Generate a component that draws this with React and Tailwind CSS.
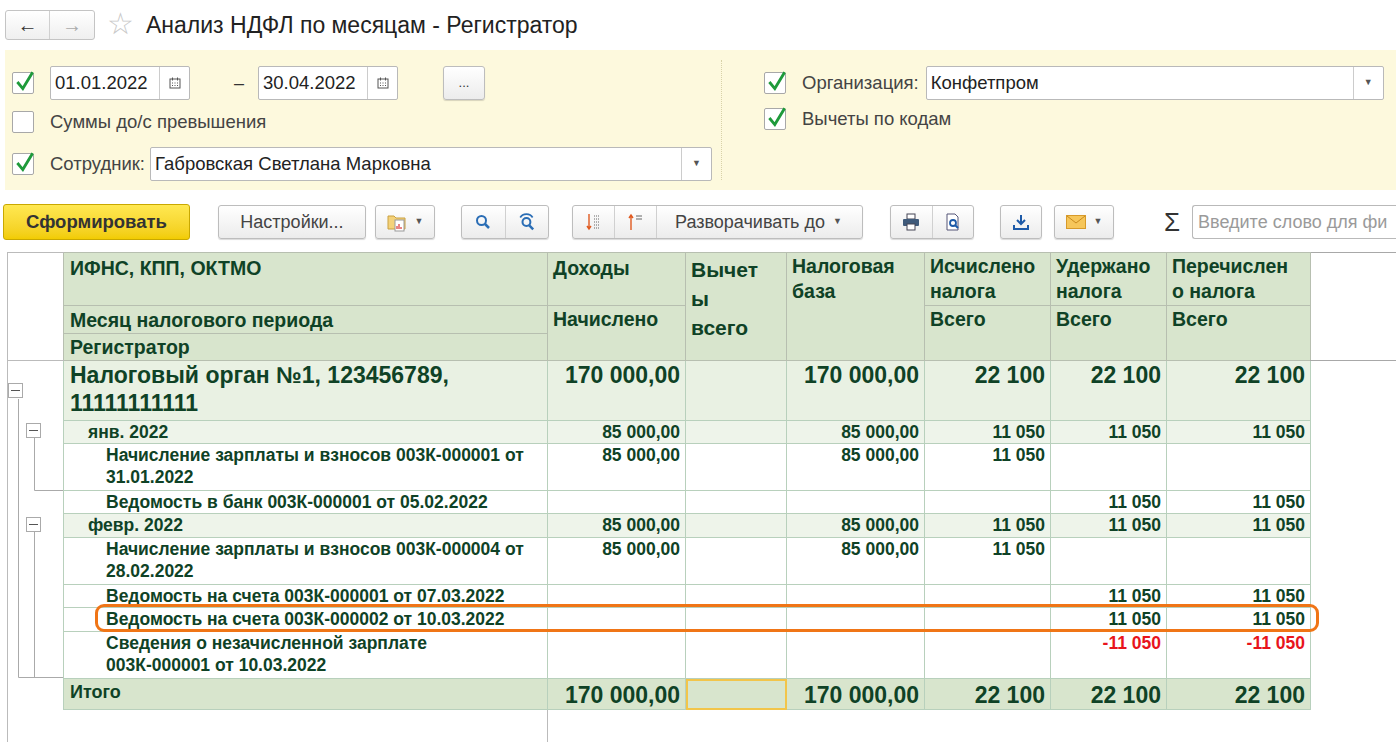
import React from 'react'

const F = { fontFamily: '"Liberation Sans", Arial, sans-serif' }

function Check({ on }) {
  return (
    <div className="w-[22px] h-[22px] border border-[#a8a8a8] bg-white rounded-[2px] relative shrink-0">
      {on && (
        <svg viewBox="0 0 22 22" className="absolute -top-[3px] left-0 w-[24px] h-[24px]">
          <path d="M4 11 L9 17 L18 2" fill="none" stroke="#1e9a3a" strokeWidth="2.6" />
        </svg>
      )}
    </div>
  )
}

function Cal() {
  return (
    <svg viewBox="0 0 12 12" className="w-[12px] h-[12px]">
      <rect x="1" y="2" width="10" height="9" fill="none" stroke="#555" />
      <rect x="3" y="0.5" width="1" height="3" fill="#555" />
      <rect x="8" y="0.5" width="1" height="3" fill="#555" />
      <path d="M3 6h1M5.5 6h1M8 6h1M3 8.5h1M5.5 8.5h1M8 8.5h1" stroke="#555" />
    </svg>
  )
}

function DateBox({ v }) {
  return (
    <div className="flex h-[34px] w-[140px] border border-[#b9b9b9] bg-white rounded-[2px]">
      <div className="flex-1 flex items-center pl-[4px] text-[18.5px] text-[#222]">{v}</div>
      <div className="w-[30px] border-l border-[#ccc] flex items-center justify-center"><Cal /></div>
    </div>
  )
}

const Btn = ({ children, className = '' }) => (
  <div className={`h-[34px] border border-[#bdbdbd] rounded-[3px] bg-gradient-to-b from-white to-[#ececec] flex items-center shadow-[0_1px_1px_rgba(0,0,0,0.15)] ${className}`}>{children}</div>
)

const Caret = () => <span className="text-[9px] text-[#555] ml-[8px]">▼</span>

const G = '#0f4226'
const rows = [
  { t: 'group', name: ['Налоговый орган №1, 123456789,', '11111111111'], v: ['170 000,00', '', '170 000,00', '22 100', '22 100', '22 100'], h: 60 },
  { t: 'month', name: ['янв. 2022'], v: ['85 000,00', '', '85 000,00', '11 050', '11 050', '11 050'], h: 23 },
  { t: 'doc', name: ['Начисление зарплаты и взносов 003К-000001 от', '31.01.2022'], v: ['85 000,00', '', '85 000,00', '11 050', '', ''], h: 47 },
  { t: 'doc', name: ['Ведомость в банк 003К-000001 от 05.02.2022'], v: ['', '', '', '', '11 050', '11 050'], h: 23 },
  { t: 'month', name: ['февр. 2022'], v: ['85 000,00', '', '85 000,00', '11 050', '11 050', '11 050'], h: 24 },
  { t: 'doc', name: ['Начисление зарплаты и взносов 003К-000004 от', '28.02.2022'], v: ['85 000,00', '', '85 000,00', '11 050', '', ''], h: 47 },
  { t: 'doc', name: ['Ведомость на счета 003К-000001 от 07.03.2022'], v: ['', '', '', '', '11 050', '11 050'], h: 23 },
  { t: 'doc', name: ['Ведомость на счета 003К-000002 от 10.03.2022'], v: ['', '', '', '', '11 050', '11 050'], h: 24 },
  { t: 'doc', name: ['Сведения о незачисленной зарплате', '003К-000001 от 10.03.2022'], v: ['', '', '', '', '-11 050', '-11 050'], h: 47, red: true },
  { t: 'total', name: ['Итого'], v: ['170 000,00', '', '170 000,00', '22 100', '22 100', '22 100'], h: 31 },
]

const widths = [56, 484, 138, 101, 138, 126, 116, 144]

export default function App() {
  return (
    <div style={F} className="w-[1396px] h-[742px] bg-white overflow-hidden text-[#333] relative">
      {/* title */}
      <div className="flex items-center h-[50px] pl-[5px] gap-[12px]">
        <div className="flex h-[30px] border border-[#c4c4c4] rounded-[3px] bg-gradient-to-b from-white to-[#efefef]">
          <div className="w-[44px] flex items-center justify-center border-r border-[#d0d0d0] text-[#333] text-[20px] font-bold">←</div>
          <div className="w-[44px] flex items-center justify-center text-[#aaa] text-[20px] font-bold">→</div>
        </div>
        <span className="text-[#c8c8c8] text-[30px] leading-none -mt-[2px]">☆</span>
        <span className="text-[23px] text-[#222]">Анализ НДФЛ по месяцам - Регистратор</span>
      </div>

      {/* filters */}
      <div className="ml-[5px] h-[140px] bg-[#fdf9dd] flex">
        <div className="w-[717px] border-r border-dotted border-[#d8d2a8] my-[10px] pl-[7px] flex flex-col">
          <div className="flex items-center h-[34px] mt-[6px]">
            <Check on />
            <div className="ml-[16px]"><DateBox v="01.01.2022" /></div>
            <span className="ml-[44px] mr-[14px] text-[18px]">–</span>
            <DateBox v="30.04.2022" />
            <Btn className="ml-[45px] w-[42px] justify-center text-[13px]">...</Btn>
          </div>
          <div className="flex items-center h-[22px] mt-[11px]">
            <Check />
            <span className="ml-[16px] text-[18.5px] text-[#444]">Суммы до/с превышения</span>
          </div>
          <div className="flex items-center h-[34px] mt-[14px]">
            <Check on />
            <span className="ml-[16px] text-[18.5px] text-[#444]">Сотрудник:</span>
            <div className="ml-[5px] flex h-[34px] w-[562px] border border-[#b9b9b9] bg-white rounded-[2px]">
              <div className="flex-1 flex items-center pl-[4px] text-[18.5px] text-[#222]">Габровская Светлана Марковна</div>
              <div className="w-[30px] border-l border-[#ccc] flex items-center justify-center text-[9px] text-[#555]">▼</div>
            </div>
          </div>
        </div>
        <div className="flex-1 pl-[42px] pt-[16px] flex flex-col">
          <div className="flex items-center h-[34px]">
            <Check on />
            <span className="ml-[16px] text-[18.5px] text-[#444]">Организация:</span>
            <div className="ml-[7px] flex h-[34px] w-[458px] border border-[#b9b9b9] bg-white rounded-[2px]">
              <div className="flex-1 flex items-center pl-[4px] text-[18.5px] text-[#222]">Конфетпром</div>
              <div className="w-[30px] border-l border-[#ccc] flex items-center justify-center text-[9px] text-[#555]">▼</div>
            </div>
          </div>
          <div className="flex items-center h-[22px] mt-[8px]">
            <Check on />
            <span className="ml-[16px] text-[18.5px] text-[#444]">Вычеты по кодам</span>
          </div>
        </div>
      </div>

      {/* toolbar */}
      <div className="flex items-center h-[34px] mt-[15px] pl-[3px]">
        <div className="h-[36px] w-[187px] rounded-[3px] border border-[#c9a800] bg-gradient-to-b from-[#ffe850] to-[#f2cc00] flex items-center justify-center text-[18.5px] font-bold text-[#333]">Сформировать</div>
        <Btn className="ml-[28px] w-[148px] justify-center text-[18px] text-[#444]">Настройки...</Btn>
        <Btn className="ml-[9px] w-[60px] justify-center">
          <svg viewBox="0 0 20 20" className="w-[20px] h-[20px]"><path d="M1 4h6l2 2h9v11H1z" fill="#f4d27a" stroke="#c9a040" /><rect x="8" y="8" width="9" height="11" fill="#fff" stroke="#999" /><path d="M10 17v-3M12 17v-5M14 17v-2" stroke="#d44" strokeWidth="1.3" /></svg>
          <Caret />
        </Btn>
        <Btn className="ml-[26px] w-[88px]">
          <div className="flex-1 flex justify-center border-r border-[#d0d0d0] h-full items-center">
            <svg viewBox="0 0 16 16" className="w-[16px] h-[16px]"><circle cx="6.5" cy="6.5" r="4.5" fill="none" stroke="#2a6db5" strokeWidth="2" /><path d="M10 10l4 4" stroke="#2a6db5" strokeWidth="2.5" /></svg>
          </div>
          <div className="flex-1 flex justify-center items-center">
            <svg viewBox="0 0 16 16" className="w-[18px] h-[18px]"><path d="M2 4a6 5 0 0 1 11 0" fill="none" stroke="#2a6db5" strokeWidth="1.5" /><circle cx="7.5" cy="8" r="3.5" fill="none" stroke="#2a6db5" strokeWidth="1.8" /><path d="M10 11l3.5 3.5" stroke="#2a6db5" strokeWidth="2.2" /></svg>
          </div>
        </Btn>
        <Btn className="ml-[23px] w-[291px]">
          <div className="w-[42px] flex justify-center border-r border-[#d0d0d0] h-full items-center">
            <svg viewBox="0 0 16 18" className="w-[16px] h-[18px]"><path d="M3 1v15M1 13l2 3 2-3" fill="none" stroke="#e05a20" strokeWidth="1.4" /><path d="M8 3h6M8 6h6M8 9h6M8 12h6M8 15h6" stroke="#666" strokeDasharray="1 1" /></svg>
          </div>
          <div className="w-[42px] flex justify-center border-r border-[#d0d0d0] h-full items-center">
            <svg viewBox="0 0 16 18" className="w-[16px] h-[18px]"><path d="M3 17V2M1 5l2-3 2 3" fill="none" stroke="#e05a20" strokeWidth="1.4" /><path d="M8 3h6M8 6h6" stroke="#666" /></svg>
          </div>
          <div className="flex-1 flex items-center pl-[18px] text-[18px] text-[#444]">Разворачивать до<Caret /></div>
        </Btn>
        <Btn className="ml-[27px] w-[84px]">
          <div className="flex-1 flex justify-center border-r border-[#d0d0d0] h-full items-center">
            <svg viewBox="0 0 18 18" className="w-[18px] h-[18px]"><rect x="5" y="1" width="8" height="5" fill="#fff" stroke="#445" /><rect x="1" y="6" width="16" height="7" rx="1" fill="#3f5a7a" /><rect x="5" y="11" width="8" height="6" fill="#fff" stroke="#445" /></svg>
          </div>
          <div className="flex-1 flex justify-center items-center">
            <svg viewBox="0 0 18 18" className="w-[18px] h-[18px]"><path d="M3 1h8l3 3v13H3z" fill="#fff" stroke="#557" /><circle cx="9" cy="10" r="3" fill="none" stroke="#1d5aa8" strokeWidth="1.8" /><path d="M11 12l3 3" stroke="#1d5aa8" strokeWidth="2" /></svg>
          </div>
        </Btn>
        <Btn className="ml-[26px] w-[42px] justify-center">
          <svg viewBox="0 0 18 18" className="w-[18px] h-[18px]"><path d="M9 2v9M5 7l4 4 4-4" fill="none" stroke="#1d5aa8" strokeWidth="2" /><path d="M2 12v4h14v-4" fill="none" stroke="#1d5aa8" strokeWidth="2" /></svg>
        </Btn>
        <Btn className="ml-[12px] w-[60px] justify-center">
          <svg viewBox="0 0 20 14" className="w-[20px] h-[14px]"><rect x="0.5" y="0.5" width="19" height="13" fill="#f6c65a" stroke="#d79a2a" /><path d="M1 1l9 7 9-7" fill="none" stroke="#c98a1e" /></svg>
          <Caret />
        </Btn>
        <span className="ml-[50px] text-[26px] text-[#333]">Σ</span>
        <div className="ml-[12px] h-[34px] flex-1 border border-[#b9b9b9] border-r-0 rounded-l-[3px] bg-white flex items-center pl-[5px] text-[18px] text-[#9a9a9a] whitespace-nowrap overflow-hidden">Введите слово для фи</div>
      </div>

      {/* table */}
      <div className="mt-[13px] ml-[7px] relative font-bold" style={{ color: G }}>
        <table className="table-fixed border-collapse" style={{ width: 1389 }}>
          <colgroup>
            {widths.map((w, i) => <col key={i} style={{ width: w }} />)}
            <col />
          </colgroup>
          <tbody>
            <tr className="h-[53px] text-[19.5px] align-top">
              <td rowSpan={3} className="border-t border-[#a8a8a8] border-l border-[#bbb] border-b"></td>
              <td className="bg-[#d8e5cd] border border-[#b7bfb0] px-[6px] pt-[1px]">ИФНС, КПП, ОКТМО</td>
              <td className="bg-[#d8e5cd] border border-[#b7bfb0] px-[5px] pt-[1px]">Доходы</td>
              <td rowSpan={3} className="bg-[#d8e5cd] border border-[#b7bfb0] px-[5px] pt-[2px] text-[21px] leading-[29px]">Вычет<br />ы<br />всего</td>
              <td rowSpan={3} className="bg-[#d8e5cd] border border-[#b7bfb0] px-[5px] pt-[1px] leading-[25px]">Налоговая<br />база</td>
              <td className="bg-[#d8e5cd] border border-[#b7bfb0] px-[5px] pt-[1px] leading-[25px]">Исчислено<br />налога</td>
              <td className="bg-[#d8e5cd] border border-[#b7bfb0] px-[5px] pt-[1px] leading-[25px]">Удержано<br />налога</td>
              <td className="bg-[#d8e5cd] border border-[#b7bfb0] px-[5px] pt-[1px] leading-[25px]">Перечислен<br />о налога</td>
              <td rowSpan={3} className="border-t border-b border-[#a8a8a8]"></td>
            </tr>
            <tr className="h-[28px] text-[19.5px] leading-[26px]">
              <td className="bg-[#d8e5cd] border-x border-[#b7bfb0] px-[6px]">Месяц налогового периода</td>
              <td rowSpan={2} className="bg-[#d8e5cd] border border-[#b7bfb0] px-[5px] align-top">Начислено</td>
              <td rowSpan={2} className="bg-[#d8e5cd] border border-[#b7bfb0] px-[5px] align-top">Всего</td>
              <td rowSpan={2} className="bg-[#d8e5cd] border border-[#b7bfb0] px-[5px] align-top">Всего</td>
              <td rowSpan={2} className="bg-[#d8e5cd] border border-[#b7bfb0] px-[5px] align-top">Всего</td>
            </tr>
            <tr className="h-[27px] text-[19.5px] leading-[26px]">
              <td className="bg-[#d8e5cd] border border-[#b7bfb0] px-[6px]">Регистратор</td>
            </tr>
            {rows.map((r, i) => {
              const bg = r.t === 'group' ? 'bg-[#e9f1e3]' : r.t === 'month' ? 'bg-[#eef4ea]' : r.t === 'total' ? 'bg-[#d8e5cd]' : 'bg-white'
              const fs = r.t === 'group' ? 'text-[23px] leading-[28px]' : r.t === 'total' ? 'text-[18px] leading-[26px]' : 'text-[17.5px] leading-[22px]'
              const vfs = r.t === 'group' || r.t === 'total' ? 'text-[23px] leading-[28px]' : 'text-[17.5px] leading-[22px]'
              const pad = r.t === 'doc' ? 'pl-[42px]' : r.t === 'month' ? 'pl-[24px]' : 'pl-[6px]'
              return (
                <tr key={i} style={{ height: r.h }} className="align-top">
                  <td className="border-l border-[#bbb] p-0"></td>
                  <td className={`${bg} border border-[#b8d0bc] ${pad} ${fs} py-0 whitespace-nowrap overflow-hidden`}>
                    {r.name.map((n, j) => <div key={j}>{n}</div>)}
                  </td>
                  {r.v.map((v, j) => (
                    <td key={j} className={`${bg} border border-[#b8d0bc] text-right pr-[5px] py-0 ${vfs} ${r.t === 'total' ? 'pt-[2px]' : ''} ${r.red ? 'text-[#e8141c]' : ''} ${r.t === 'total' && j === 1 ? 'outline outline-2 -outline-offset-2 outline-[#f2c54a]' : ''}`}>{v}</td>
                  ))}
                  <td className="p-0"></td>
                </tr>
              )
            })}
            <tr className="h-[40px]">
              <td className="border-l border-[#bbb]"></td>
              <td className="border-r border-[#bbb]"></td>
              <td colSpan={7}></td>
            </tr>
          </tbody>
        </table>

        {/* tree lines */}
        <svg className="absolute left-0 top-0 pointer-events-none" width="63" height="440">
          <g stroke="#aaa" fill="none">
            <path d="M11.5 147V425.5H56" />
            <path d="M27.5 185V238.5H56" />
            <path d="M27.5 275V425.5" />
            <rect x="1.5" y="131.5" width="14" height="14" fill="#fff" />
            <path d="M4 138.5h9" stroke="#555" />
            <rect x="19.5" y="171.5" width="14" height="14" fill="#fff" />
            <path d="M22 178.5h9" stroke="#555" />
            <rect x="19.5" y="265.5" width="14" height="14" fill="#fff" />
            <path d="M22 272.5h9" stroke="#555" />
          </g>
        </svg>

        {/* highlight */}
        <div className="absolute left-[88px] top-[352px] w-[1224px] h-[28px] border-[3px] border-[#f07516] rounded-[9px] pointer-events-none"></div>
      </div>
    </div>
  )
}
